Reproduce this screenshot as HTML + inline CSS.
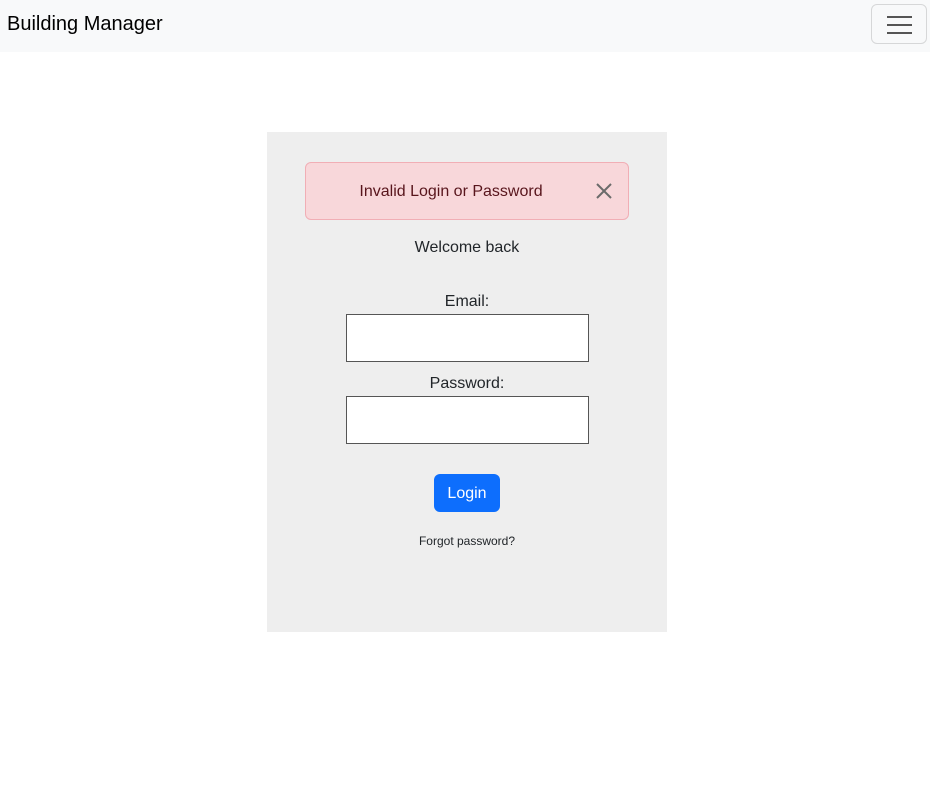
<!DOCTYPE html>
<html><head><style>
body{margin:0;width:930px;height:801px;background:#fff;font-family:"Liberation Sans",sans-serif;color:#212529;position:relative;overflow:hidden}
.nav{position:absolute;left:0;top:0;width:930px;height:52px;background:#f8f9fa}
.brand{position:absolute;left:7px;top:13px;font-size:20px;color:#000}
.tog{position:absolute;left:871px;top:4px;width:56px;height:40px;border:1px solid #d6d7d8;border-radius:6px;box-sizing:border-box}
.tog i{position:absolute;left:15px;width:25px;height:2px;background:#555}
.card{position:absolute;left:267px;top:132px;width:400px;height:500px;background:#eee}
.alert{position:absolute;left:38px;top:30px;width:324px;height:58px;box-sizing:border-box;background:#f8d7da;border:1px solid #f1aeb5;border-radius:6px;color:#58151c;font-size:16px;text-align:center;line-height:57px}
.alert span{position:relative;left:-16px}
.t{position:absolute;width:400px;text-align:center;font-size:16px;left:0}
.in{position:absolute;left:79px;width:243px;height:48px;box-sizing:border-box;border:1px solid #555;background:#fff}
.btn{position:absolute;left:167px;top:342px;width:66px;height:38px;background:#0d6efd;color:#fff;border-radius:6px;font-size:16px;text-align:center;line-height:39px}
</style></head><body>
<div class="nav"><div class="brand">Building Manager</div>
<div class="tog"><i style="top:11px"></i><i style="top:19px"></i><i style="top:27px"></i></div></div>
<div class="card">
<div class="alert"><span>Invalid Login or Password</span>
<svg style="position:absolute;left:290px;top:20px" width="16" height="16" viewBox="0 0 16 16"><path d="M1 1L15 15M15 1L1 15" stroke="#6b6b6b" stroke-width="2"/></svg></div>
<div class="t" style="top:107px">Welcome back</div>
<div class="t" style="top:161px">Email:</div>
<div class="in" style="top:182px"></div>
<div class="t" style="top:243px">Password:</div>
<div class="in" style="top:264px"></div>
<div class="btn">Login</div>
<div class="t" style="top:402px;font-size:12px">Forgot password?</div>
</div>
</body></html>
